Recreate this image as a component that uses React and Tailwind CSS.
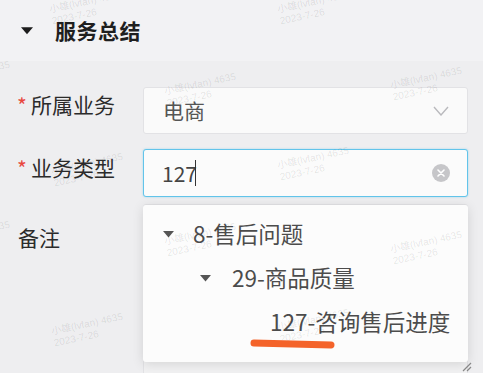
const marks = [
  [50, -4], [278, -4],
  [-61, 66], [165, 78], [391, 72],
  [52, 158], [278, 152],
  [-61, 226], [165, 228], [391, 236],
  [52, 318], [278, 314],
]

function Watermarks() {
  return (
    <div className="pointer-events-none absolute inset-0 z-20">
      {marks.map(([x, y], i) => (
        <div
          key={i}
          className="absolute -rotate-12 text-[10px] leading-[12px] text-black/10 whitespace-nowrap font-['Liberation_Sans','Noto_Sans_CJK_SC',sans-serif]"
          style={{ left: x, top: y }}
        >
          <div>小雄(lvfan) 4635</div>
          <div>2023-7-26</div>
        </div>
      ))}
    </div>
  )
}

function Caret({ className }) {
  return (
    <svg width="11" height="7" viewBox="0 0 11 7" className={className}>
      <path d="M0 0 L11 0 L5.5 6.5 Z" fill="currentColor" />
    </svg>
  )
}

function Label({ required, children, className = '' }) {
  return (
    <div className={`flex items-center text-[21px] leading-[24px] text-[#2b2b2b] ${className}`}>
      {required && <span className="w-[14px] text-[#e8483f] text-[21px] leading-none mt-[3px] -ml-[1px]">*</span>}
      <span>{children}</span>
    </div>
  )
}

export default function App() {
  return (
    <div className="relative w-[483px] h-[373px] overflow-hidden bg-[#eeeef0] font-['Noto_Sans_CJK_SC','Noto_Sans',sans-serif]">
      <div className="h-[61px] bg-[#f2f2f4] flex items-center pl-[21px]">
        <Caret className="text-[#1c1c1c] w-[12px] h-[8px]" />
        <span className="ml-[22px] text-[21px] font-bold text-[#1f1f1f] tracking-[0.5px]">服务总结</span>
      </div>

      <div className="pt-[26px] pl-[18px] pr-[15px] flex flex-col gap-[15px]">
        <div className="flex">
          <Label required className="w-[125px] mt-[5px] self-start">所属业务</Label>
          <div className="flex-1 h-[47px] bg-[#fafafa] border border-[#e2e2e5] rounded-[3px] flex items-center pl-[19px] pr-[18px]">
            <span className="flex-1 text-[21px] text-[#555]">电商</span>
            <svg width="16" height="10" viewBox="0 0 16 10">
              <path d="M1 1 L8 9 L15 1" fill="none" stroke="#b9b9bd" strokeWidth="1.4" />
            </svg>
          </div>
        </div>

        <div className="flex">
          <Label required className="w-[125px] mt-[6px] self-start">业务类型</Label>
          <div className="flex-1 h-[48px] bg-[#fbfbfb] border-[1.5px] border-[#62c4ea] rounded-[3px] shadow-[0_0_2px_rgba(98,196,234,0.6)] flex items-center pl-[18px] pr-[17px]">
            <span className="text-[21px] text-[#444] leading-none">127</span>
            <span className="w-[1.5px] h-[26px] bg-[#333] -ml-[2px]" />
            <span className="flex-1" />
            <span className="w-[18px] h-[18px] rounded-full bg-[#c6c6c9] flex items-center justify-center">
              <svg width="8" height="8" viewBox="0 0 8 8">
                <path d="M1 1 L7 7 M7 1 L1 7" stroke="#fff" strokeWidth="1.6" strokeLinecap="round" />
              </svg>
            </span>
          </div>
        </div>

        <div className="flex -mt-[8px]">
          <Label className="w-[125px] mt-[21px] self-start">备注</Label>
          <div className="flex-1 h-[175px] bg-[#f1f1f2] border border-[#e2e2e5] rounded-[3px]" />
        </div>
      </div>

      <div className="absolute left-[143px] top-[205px] w-[325px] h-[157px] bg-[#fcfcfc] rounded-[3px] shadow-[0_2px_12px_rgba(0,0,0,0.12)] z-10 pt-[7px] text-[22.5px] text-[#4c4c4c]">
        <div className="h-[44px] flex items-center pl-[20px]">
          <Caret className="text-[#555] w-[11px] h-[7px]" />
          <span className="ml-[19px]">8-售后问题</span>
        </div>
        <div className="h-[44px] flex items-center pl-[57px]">
          <Caret className="text-[#555] w-[11px] h-[7px]" />
          <span className="ml-[21px]">29-商品质量</span>
        </div>
        <div className="h-[44px] flex items-center pl-[127px]">
          <span>127-咨询售后进度</span>
        </div>
      </div>

      <svg className="absolute left-[462px] top-[362px] z-10" width="10" height="10" viewBox="0 0 10 10">
        <path d="M1 9 L9 1 M5 9 L9 5" stroke="#888" strokeWidth="1.2" />
      </svg>

      <svg className="absolute left-[250px] top-[337px] z-30" width="86" height="14" viewBox="0 0 86 14">
        <path d="M4 6 L81 8" stroke="#f4632a" strokeWidth="7" strokeLinecap="round" />
      </svg>

      <Watermarks />
    </div>
  )
}
